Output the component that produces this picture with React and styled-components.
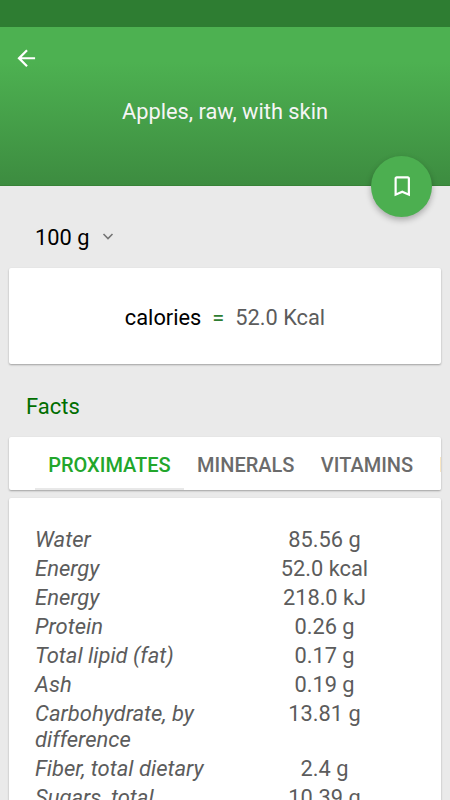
import React from "react";
import styled, { createGlobalStyle } from "styled-components";

const GlobalStyle = createGlobalStyle`
  * {
    box-sizing: border-box;
  }

  body {
    margin: 0;
    background: #eaeaea;
    font-family: Roboto, "Liberation Sans", sans-serif;
  }

  button {
    border: 0;
    padding: 0;
    background: none;
    font-family: inherit;
  }

  svg {
    display: block;
  }
`;

const Screen = styled.div`
  display: flex;
  flex-direction: column;
  height: 800px;
  overflow: hidden;
  background: #eaeaea;
  font-size: 21.8px;
  line-height: 26px;
  color: #5c5c5c;
`;

const StatusBar = styled.div`
  flex: none;
  height: 27px;
  background: #2e7d32;
`;

const Header = styled.header`
  position: relative;
  flex: none;
  height: 159px;
  padding-top: 18px;
  background: linear-gradient(#4db151, #4db151 22%, #3d8c40);
  border-bottom: 1px solid #388238;
`;

const BackButton = styled.button`
  display: block;
  margin-left: 13px;
`;

const Title = styled.h1`
  margin: 27px 0 0;
  text-align: center;
  font-size: 21.8px;
  font-weight: 400;
  line-height: 26px;
  color: #f5f5f5;
`;

const BookmarkButton = styled.button`
  position: absolute;
  right: 18px;
  bottom: -32px;
  display: flex;
  align-items: center;
  justify-content: center;
  width: 61px;
  height: 61px;
  padding-left: 1px;
  border-radius: 50%;
  background: #4caf50;
  box-shadow: 0 3px 6px rgba(0, 0, 0, 0.28);
`;

const Content = styled.main`
  padding: 0 9px;
`;

const Serving = styled.div`
  display: flex;
  align-items: center;
  gap: 13px;
  height: 82px;
  padding: 21px 26px 0;
  color: #000;

  svg {
    margin-bottom: 2px;
  }
`;

const Card = styled.section`
  border-radius: 2px;
  background: #fff;
  box-shadow: 0 1px 2px rgba(0, 0, 0, 0.32);
`;

const CaloriesCard = styled(Card)`
  display: flex;
  align-items: center;
  justify-content: center;
  height: 96px;
  padding-top: 4px;

  .label {
    color: #000;
  }

  .equals {
    margin: 0 11px;
    color: #2e7d32;
  }
`;

const SectionTitle = styled.h2`
  margin: 0;
  padding: 30px 17px 17px;
  font-size: 22px;
  font-weight: 400;
  line-height: 26px;
  color: #006e00;
`;

const Tabs = styled(Card)`
  display: flex;
  height: 53px;
  padding-left: 26px;
  overflow: hidden;
`;

const Tab = styled.button`
  flex: none;
  height: 53px;
  padding: 4px 13.2px 0;
  border-bottom: 2px solid ${(props) => (props.$active ? "#e8e8e8" : "#fff")};
  font-size: 20px;
  font-weight: 500;
  color: ${(props) => (props.$active ? "#22a62b" : "#6b6b6b")};
`;

const FactsCard = styled(Card)`
  margin-top: 8px;
  padding: 29px 26px;
`;

const FactRow = styled.div`
  display: grid;
  grid-template-columns: 190px 198px;
  margin-bottom: 3px;
  line-height: 26px;

  .name {
    padding-right: 16px;
    font-size: 22px;
    font-style: italic;
  }

  .value {
    padding-left: 1px;
    text-align: center;
  }
`;

const tabs = ["PROXIMATES", "MINERALS", "VITAMINS", "LIPIDS"];

const facts = [
  ["Water", "85.56 g"],
  ["Energy", "52.0 kcal"],
  ["Energy", "218.0 kJ"],
  ["Protein", "0.26 g"],
  ["Total lipid (fat)", "0.17 g"],
  ["Ash", "0.19 g"],
  ["Carbohydrate, by difference", "13.81 g"],
  ["Fiber, total dietary", "2.4 g"],
  ["Sugars, total", "10.39 g"],
];

function BackIcon() {
  return (
    <svg width="26.5" height="26.5" viewBox="0 0 24 24" fill="#fff">
      <path d="M20 11H7.83l5.59-5.59L12 4l-8 8 8 8 1.41-1.41L7.83 13H20v-2z" />
    </svg>
  );
}

function BookmarkIcon() {
  return (
    <svg width="26.5" height="26.5" viewBox="0 0 24 24" fill="#fff">
      <path d="M17 3H7c-1.1 0-1.99.9-1.99 2L5 21l7-3 7 3V5c0-1.1-.9-2-2-2zm0 15l-5-2.18L7 18V5h10v13z" />
    </svg>
  );
}

function ChevronIcon() {
  return (
    <svg width="12" height="8" viewBox="0 0 12 8" fill="none">
      <path d="M1.5 1L6 5.5l4.5-4.5" stroke="#757575" strokeWidth="1.6" />
    </svg>
  );
}

export default function App() {
  return (
    <>
      <GlobalStyle />
      <Screen>
        <StatusBar />
        <Header>
          <BackButton aria-label="Back">
            <BackIcon />
          </BackButton>
          <Title>Apples, raw, with skin</Title>
          <BookmarkButton aria-label="Bookmark">
            <BookmarkIcon />
          </BookmarkButton>
        </Header>
        <Content>
          <Serving>
            <span>100 g</span>
            <ChevronIcon />
          </Serving>
          <CaloriesCard>
            <span className="label">calories</span>
            <span className="equals">=</span>
            <span>52.0 Kcal</span>
          </CaloriesCard>
          <SectionTitle>Facts</SectionTitle>
          <Tabs>
            {tabs.map((tab, i) => (
              <Tab key={tab} $active={i === 0}>
                {tab}
              </Tab>
            ))}
          </Tabs>
          <FactsCard>
            {facts.map(([name, value], i) => (
              <FactRow key={i}>
                <div className="name">{name}</div>
                <div className="value">{value}</div>
              </FactRow>
            ))}
          </FactsCard>
        </Content>
      </Screen>
    </>
  );
}
